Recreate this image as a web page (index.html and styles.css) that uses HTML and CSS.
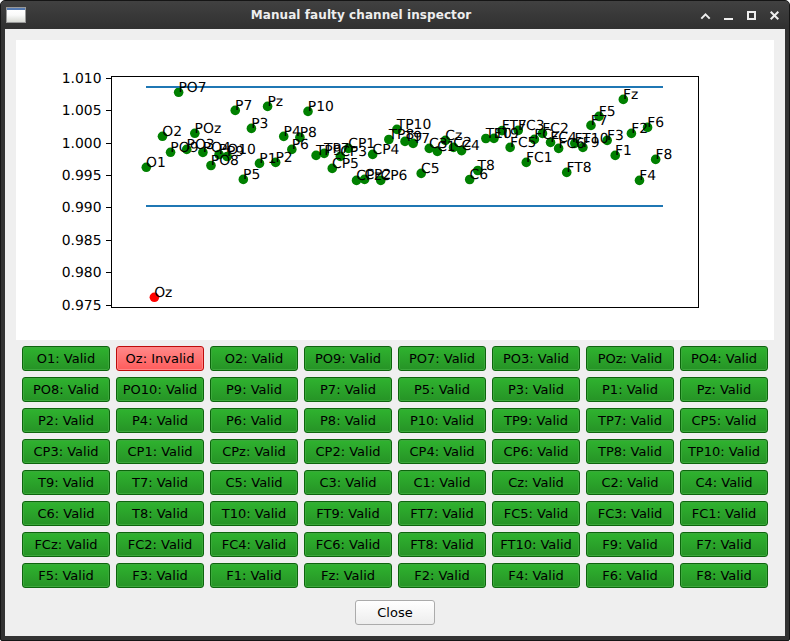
FILE: index.html
```html
<!DOCTYPE html>
<html lang="en">
<head>
<meta charset="utf-8">
<title>Manual faulty channel inspector</title>
<link rel="stylesheet" href="styles.css">
</head>
<body>
<div class="window">
  <header class="titlebar">
    <span class="app-icon"></span>
    <h1 class="title">Manual faulty channel inspector</h1>
    <svg class="controls" width="80" height="12" viewBox="0 0 80 12" shape-rendering="crispEdges">
      <path class="glyph" shape-rendering="auto" d="M1.3 7.6 5.5 3.4 9.7 7.6"/>
      <rect class="solid" x="24" y="7" width="9" height="2"/>
      <rect class="glyph" x="48" y="1" width="7" height="7"/>
      <path class="glyph" shape-rendering="auto" d="M70.7 .7 78.3 8.3M78.3 .7 70.7 8.3"/>
    </svg>
  </header>
  <main class="content">
    <svg class="plot" id="plot" width="758" height="300" viewBox="16 40 758 300"></svg>
    <div class="channels" id="channels"></div>
    <div class="actions"><button class="close">Close</button></div>
  </main>
</div>
<script src="app.js"></script>
</body>
</html>
```
FILE: styles.css
```css
* { box-sizing: border-box; }
body {
  margin: 0;
  width: 790px;
  height: 641px;
  overflow: hidden;
  background: #fff;
  font-family: "DejaVu Sans", sans-serif;
}
.window {
  width: 790px;
  height: 641px;
  display: flex;
  flex-direction: column;
  padding: 0 4px 4px;
  border: 1px solid #151515;
  border-radius: 5px 5px 2px 2px;
  background: #333;
}
.titlebar {
  height: 28px;
  flex: none;
  display: flex;
  align-items: center;
  margin: 0 -4px;
  padding: 0 9px 0 5px;
  border-radius: 4px 4px 0 0;
  background: linear-gradient(#414141, #303030);
}
.app-icon {
  width: 20px;
  height: 16px;
  border: 1px solid #989898;
  background: linear-gradient(#5479b0 0 2px, #fff 2px, #fafafa 7px, #d9dbd5);
}
.title {
  flex: 1;
  margin: 0 0 0 -4px;
  text-align: center;
  color: #eee;
  font-size: 12px;
  letter-spacing: 0.08px;
  line-height: 28px;
  font-weight: bold;
}
.controls { margin-top: 4px; }
.glyph { fill: none; stroke: #eee; stroke-width: 2; }
.solid { fill: #eee; }
.content {
  flex: 1;
  display: flex;
  flex-direction: column;
  padding: 11px;
  background: #efefef;
}
.plot { display: block; background: #fff; flex: none; }
.plot text { font-size: 13.89px; fill: #000; text-rendering: geometricPrecision; }
.axes { fill: none; stroke: #000; stroke-width: 1; shape-rendering: crispEdges; }
.limit { stroke: #1f77b4; stroke-width: 2; shape-rendering: crispEdges; }
.valid-point { fill: #008000; }
.invalid-point { fill: #f00; }
.tick-label { text-anchor: end; }
.channels {
  display: grid;
  grid-template-columns: repeat(8, 88px);
  grid-auto-rows: 25px;
  gap: 6px;
  padding: 6px 6px 0;
}
button {
  padding: 0;
  border-radius: 3px;
  font: 13px/20px "DejaVu Sans", sans-serif;
  color: #000;
  white-space: nowrap;
}
.channel {
  border: 1px solid #0c650c;
  background: linear-gradient(#2fb32f, #269326);
  box-shadow: inset 0 0 0 1px #3ba83b;
}
.channel.invalid {
  border-color: #bd0b0b;
  background: linear-gradient(#ff8989, #ff5c5c);
  box-shadow: inset 0 0 0 1px #ff8686;
}
.actions { display: flex; justify-content: center; padding-top: 12px; }
.close {
  width: 80px;
  height: 25px;
  border: 1px solid #ababab;
  background: linear-gradient(#fff, #ededed);
}
```
FILE: app.js
```js
// Channel name and vertical position of its marker in the chart.
const channels = [
  ["O1",167.3],["Oz",297.3],["O2",136.3],["PO9",152.3],["PO7",92.3],["PO3",149.4],["POz",133.3],["PO4",152.4],
  ["PO8",165.5],["PO10",154.5],["P9",156.5],["P7",110.4],["P5",179.4],["P3",128.4],["P1",163.4],["Pz",106.4],
  ["P2",162.4],["P4",136.4],["P6",149.4],["P8",137.4],["P10",111.4],["TP9",155.4],["TP7",153.4],["CP5",168.4],
  ["CP3",156.4],["CP1",148.4],["CPz",180.4],["CP2",179.4],["CP4",154.4],["CP6",180.4],["TP8",139.5],["TP10",129.4],
  ["T9",141.4],["T7",143.4],["C5",173.4],["C3",148.4],["C1",151.4],["Cz",140.4],["C2",147.4],["C4",150.6],
  ["C6",179.5],["T8",170.5],["T10",138.5],["FT9",138.4],["FT7",130.6],["FC5",147.4],["FC3",130.4],["FC1",162.4],
  ["FCz",139.4],["FC2",133.4],["FC4",142.4],["FC6",148.4],["FT8",172.4],["FT10",143.4],["F9",147.4],["F7",125.4],
  ["F5",116.4],["F3",140.4],["F1",155.4],["Fz",99.4],["F2",133.4],["F4",180.4],["F6",127.4],["F8",159.4]
];
const ticks = [["1.010",78],["1.005",110],["1.000",143],["0.995",175],["0.990",207],["0.985",240],["0.980",272],["0.975",305]];

let points = "", labels = "", axes = "", buttons = "";
channels.forEach(([name, y], i) => {
  const x = 146.3 + i * 8.085;
  const bad = name === "Oz";
  points += `<circle class="${bad ? "invalid" : "valid"}-point" cx="${x}" cy="${y}" r="4.8"/>`;
  labels += `<text x="${x - 0.2}" y="${Math.round(y - 0.3)}">${name}</text>`;
  buttons += `<button class="channel${bad ? " invalid" : ""}">${name}: ${bad ? "Invalid" : "Valid"}</button>`;
});
ticks.forEach(([label, y]) => {
  axes += `<path class="axes" d="M106 ${y}.5H111"/><text class="tick-label" x="101.5" y="${y + 5}">${label}</text>`;
});
document.getElementById("plot").innerHTML = points +
  '<path class="limit" d="M146 87H663M146 206H663"/>' +
  '<rect class="axes" x="111.5" y="76.5" width="587" height="231"/>' + axes + labels;
document.getElementById("channels").innerHTML = buttons;
```
